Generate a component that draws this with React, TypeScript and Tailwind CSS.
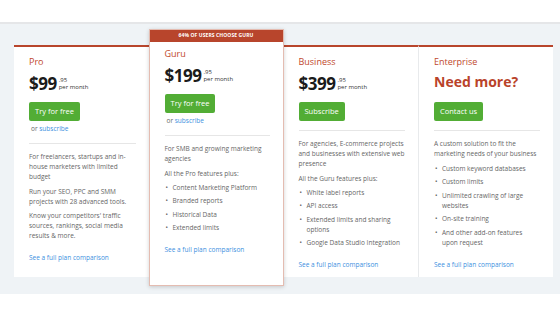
import React from "react";

type Plan = {
  name: string;
  price?: string;
  button: string;
  subscribe?: boolean;
  intro: string[];
  lead?: string;
  features?: string[];
  featured?: boolean;
  headline?: string;
};

const plans: Plan[] = [
  {
    name: "Pro",
    price: "$99",
    button: "Try for free",
    subscribe: true,
    intro: [
      "For freelancers, startups and in-house marketers with limited budget",
      "Run your SEO, PPC and SMM projects with 28 advanced tools.",
      "Know your competitors' traffic sources, rankings, social media results & more.",
    ],
  },
  {
    name: "Guru",
    price: "$199",
    button: "Try for free",
    subscribe: true,
    featured: true,
    intro: ["For SMB and growing marketing agencies"],
    lead: "All the Pro features plus:",
    features: ["Content Marketing Platform", "Branded reports", "Historical Data", "Extended limits"],
  },
  {
    name: "Business",
    price: "$399",
    button: "Subscribe",
    intro: ["For agencies, E-commerce projects and businesses with extensive web presence"],
    lead: "All the Guru features plus:",
    features: [
      "White label reports",
      "API access",
      "Extended limits and sharing options",
      "Google Data Studio Integration",
    ],
  },
  {
    name: "Enterprise",
    headline: "Need more?",
    button: "Contact us",
    intro: ["A custom solution to fit the marketing needs of your business"],
    features: [
      "Custom keyword databases",
      "Custom limits",
      "Unlimited crawling of large websites",
      "On-site training",
      "And other add-on features upon request",
    ],
  },
];

function PlanBody({ plan }: { plan: Plan }) {
  return (
    <div className="pl-[15px] pr-[13px]">
      <div className="h-[12px] text-[9px] leading-[12px] text-[#c0472b]">{plan.name}</div>

      {plan.price ? (
        <div className="mt-[6px] flex h-[20px] items-center">
          <span className="text-[17px] font-bold leading-[20px] text-[#1b1b1b] tracking-[-0.5px]">
            {plan.price}
          </span>
          <span className="ml-[2px] flex flex-col text-[6px] leading-[7px] text-[#333]">
            <span>.95</span>
            <span>per month</span>
          </span>
        </div>
      ) : (
        <div className="mt-[6px] h-[16px] text-[14px] font-bold leading-[16px] text-[#b9432a]">
          {plan.headline}
        </div>
      )}

      <button
        className={`${plan.price ? "mt-[8px]" : "mt-[12px]"} flex h-[19px] items-center rounded-[2px] bg-[#52ad35] px-[6px] text-[7.5px] text-white`}
      >
        {plan.button}
      </button>

      {plan.subscribe && (
        <div className="mt-[3px] h-[10px] pl-[2px] text-[6.5px] leading-[10px] text-[#666]">
          or <span className="text-[#3d8fe0]">subscribe</span>
        </div>
      )}

      <div className="mt-[9px] h-px bg-[#e6e6e6]" />

      <div className="mt-[8px] text-[6.5px] leading-[10px] text-[#666]">
        {plan.intro.map((p) => (
          <p key={p} className="mb-[4.5px]">
            {p}
          </p>
        ))}
        {plan.lead && <p className="mb-[4px]">{plan.lead}</p>}
        {plan.features && (
          <ul>
            {plan.features.map((f) => (
              <li key={f} className="mb-[3.5px] flex">
                <span className="w-[8px] shrink-0 pl-[1px]">•</span>
                <span>{f}</span>
              </li>
            ))}
          </ul>
        )}
        <div className="mt-[12px] text-[#3d8fe0]">See a full plan comparison</div>
      </div>
    </div>
  );
}

export default function App() {
  return (
    <div className="h-[315px] w-[560px] overflow-hidden bg-white" style={{ fontFamily: '"Open Sans", "Noto Sans", sans-serif' }}>
      <div className="h-[22px] bg-white" />
      <div className="h-[2px] bg-[#e5e6e8]" />
      <div className="bg-[#eff3f6] pl-[14px] pr-[8px] pt-[21px] pb-[17px]">
        <div className="flex items-start">
          {plans.map((plan, i) =>
            plan.featured ? (
              <div
                key={plan.name}
                className="relative z-10 -mt-[16px] -mb-[9px] h-[257px] w-[135px] shrink-0 border border-[#e4bcb1] bg-white shadow-[0_1px_4px_rgba(0,0,0,0.18)]"
              >
                <div className="flex h-[12px] items-center justify-center bg-[#b8452c] text-[5px] font-bold tracking-[0.1px] text-white">
                  64% OF USERS CHOOSE GURU
                </div>
                <div className="pt-[6px]">
                  <PlanBody plan={plan} />
                </div>
              </div>
            ) : (
              <div
                key={plan.name}
                className={`h-[232px] w-[134.5px] shrink-0 border-t-2 border-[#b8452c] bg-white pt-[9px] ${
                  i === plans.length - 1 ? "border-l border-l-[#e8eaec]" : ""
                }`}
              >
                <PlanBody plan={plan} />
              </div>
            )
          )}
        </div>
      </div>
    </div>
  );
}
